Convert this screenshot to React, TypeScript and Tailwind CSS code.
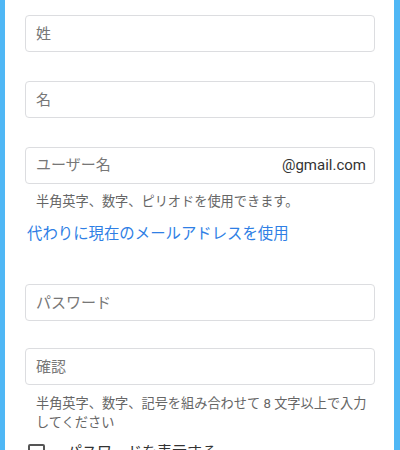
import { useState } from 'react'

const fieldClass =
  'h-[37px] w-full rounded-[4px] border border-[#dcdde0] bg-white px-[10px] text-[15px] text-[#333] placeholder:text-[#777] outline-none'

function Field({ placeholder, type = 'text' }: { placeholder: string; type?: string }) {
  return <input type={type} placeholder={placeholder} className={fieldClass} />
}

export default function App() {
  const [show, setShow] = useState(false)

  return (
    <div
      className="flex min-h-[450px] bg-[#4fb7f5]"
      style={{ fontFamily: "Roboto, 'Noto Sans CJK JP', sans-serif" }}
    >
      <div className="ml-[5px] mr-[6px] flex-1 bg-white pl-[20px] pr-[19px] pt-[15px]">
        <Field placeholder="姓" />
        <div className="mt-[29px]">
          <Field placeholder="名" />
        </div>
        <div className="mt-[29px] flex h-[37px] items-center rounded-[4px] border border-[#dcdde0] pl-[10px] pr-[8px]">
          <input
            placeholder="ユーザー名"
            className="min-w-0 flex-1 text-[15px] text-[#333] placeholder:text-[#777] outline-none"
          />
          <span className="text-[15px] text-[#333]">@gmail.com</span>
        </div>
        <p className="mt-[9px] pl-[11px] text-[13.2px] leading-[18px] text-[#666]">
          半角英字、数字、ピリオドを使用できます。
        </p>
        <a href="#" className="mt-[13px] block pl-[2px] text-[15.4px] leading-[20px] text-[#2f7fe5]">
          代わりに現在のメールアドレスを使用
        </a>
        <div className="mt-[40px]">
          <Field placeholder="パスワード" type={show ? 'text' : 'password'} />
        </div>
        <div className="mt-[27px]">
          <Field placeholder="確認" type={show ? 'text' : 'password'} />
        </div>
        <p className="mt-[9px] pl-[11px] pr-[2px] text-[13.2px] leading-[19px] text-[#666]">
          半角英字、数字、記号を組み合わせて 8 文字以上で入力してください
        </p>
        <label className="mt-[9px] flex items-center gap-[22px] pl-[3px]">
          <span
            onClick={() => setShow(!show)}
            className="block h-[17px] w-[17px] rounded-[2px] border-2 border-[#555]"
          />
          <span className="text-[15px] text-[#333]">パスワードを表示する</span>
        </label>
      </div>
    </div>
  )
}
